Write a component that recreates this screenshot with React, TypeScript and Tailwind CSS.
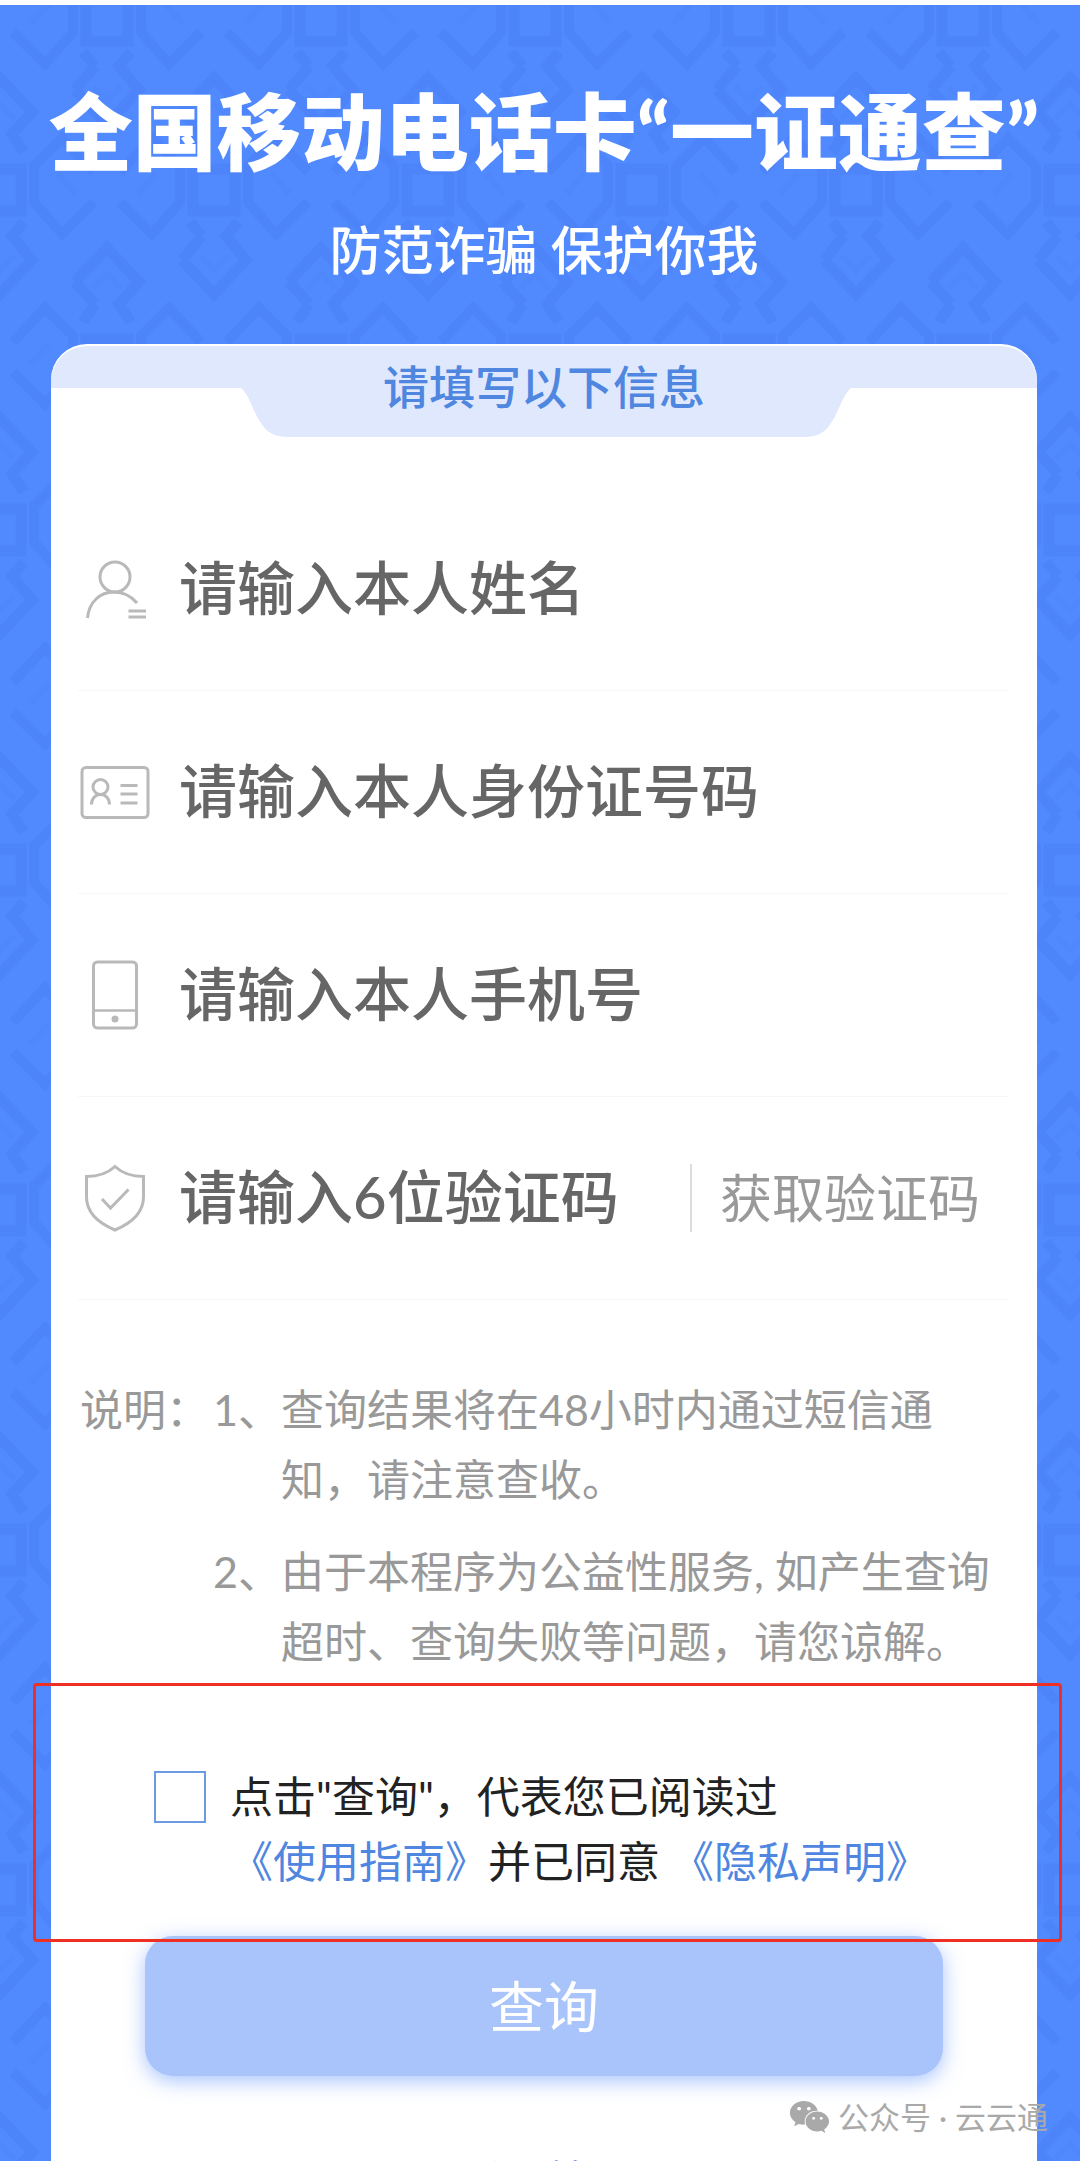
import { useState } from 'react';
import type { ReactNode } from 'react';
import { FaWeixin } from 'react-icons/fa';

type Field = {
  id: string;
  label: string;
  type: string;
  icon: ReactNode;
};

const iconProps = {
  viewBox: '0 0 70 70',
  fill: 'none',
  stroke: '#b9b9b9',
  strokeWidth: 3,
  className: 'h-[70px] w-[70px] shrink-0',
  'aria-hidden': true,
};

const UserIcon = () => (
  <svg {...iconProps}>
    <circle cx="35" cy="23" r="15" />
    <path d="M7.500 64C9 48 20 38 34 38c9 0 17 4 23 11" />
    <path d="M48.500 57H66M48.500 63H66" />
  </svg>
);

const IdCardIcon = () => (
  <svg {...iconProps}>
    <rect x="2" y="10.500" width="66" height="50" rx="4" />
    <circle cx="20.500" cy="30" r="7.500" />
    <path d="M11.500 47.500c0-6 4-10 9-10s9 4 9 10M40.500 28.500h17M40.500 37h17M40.500 46h17" />
  </svg>
);

const PhoneIcon = () => (
  <svg {...iconProps}>
    <rect x="13.500" y="2" width="43" height="66" rx="4" />
    <path d="M13.500 50.500h43" strokeWidth={2.5} />
    <circle cx="35" cy="59" r="3.500" fill="#b9b9b9" stroke="none" />
  </svg>
);

const ShieldIcon = () => (
  <svg {...iconProps}>
    <path d="M35 3.500C28 10 18 13.500 6.500 13.500V34c0 16 13 26.500 28.500 33C50.500 60.500 63.500 50 63.500 34V13.500C52 13.500 42 10 35 3.500Z" />
    <path d="M22 36l8.500 9L48.500 26.500" />
  </svg>
);

const FIELDS: Field[] = [
  { id: 'name', label: '请输入本人姓名', type: 'text', icon: <UserIcon /> },
  { id: 'idcard', label: '请输入本人身份证号码', type: 'text', icon: <IdCardIcon /> },
  { id: 'phone', label: '请输入本人手机号', type: 'tel', icon: <PhoneIcon /> },
  { id: 'code', label: '请输入6位验证码', type: 'text', icon: <ShieldIcon /> },
];

const NOTES = [
  '查询结果将在48小时内通过短信通知，请注意查收。',
  '由于本程序为公益性服务, 如产生查询超时、查询失败等问题，请您谅解。',
];

// One woven ornament, centred on its square
function Ornament({ x, y }: { x: number; y: number }) {
  return (
    <g transform={`translate(${x} ${y})`}>
      <rect x="-21" y="-21" width="42" height="42" strokeWidth="11" />
      <path d="M-32 -78L0 -112L32 -78L12 -56L24 -38M-12 -56L-32 -78M-12 -56L-24 -38" strokeWidth="11" />
      <path d="M-32 70L0 104L32 70L12 46L24 32M-12 46L-32 70M-12 46L-24 32" strokeWidth="11" />
      <path d="M-14 -72L0 -86L14 -72M-14 66L0 80L14 66" stroke="#4f87fc" strokeWidth="6" />
      <path d="M-94 -18L-62 -52L-34 -24L-34 12L-62 44L-94 12M94 -18L62 -52L34 -24L34 12L62 44L94 12" strokeWidth="10" />
      <path d="M-76 4L-58 -16M76 4L58 -16" stroke="#4f87fc" strokeWidth="7" />
    </g>
  );
}

function Backdrop() {
  return (
    <svg className="absolute inset-0 h-full w-full" aria-hidden="true">
      <defs>
        <pattern id="weave" width="214" height="340" patternUnits="userSpaceOnUse">
          <g fill="none" stroke="#4d84fa">
            <Ornament x={107} y={15} />
            <Ornament x={107} y={355} />
            <Ornament x={0} y={185} />
            <Ornament x={214} y={185} />
          </g>
        </pattern>
      </defs>
      <rect width="100%" height="100%" fill="#5189fe" />
      <rect width="100%" height="100%" fill="url(#weave)" />
    </svg>
  );
}

export default function App() {
  const [values, setValues] = useState<Record<string, string>>({});
  const [agreed, setAgreed] = useState(false);

  return (
    <div className="relative flex h-screen flex-col overflow-hidden border-t-[5px] border-white font-['Lato','Noto_Sans_CJK_SC',sans-serif]">
      <Backdrop />

      <header className="relative pt-[77px] pl-2 text-center text-white">
        <h1 className="text-[84px] leading-[100px] font-black whitespace-nowrap">全国移动电话卡“一证通查”</h1>
        <p className="mt-[36px] text-[52px] leading-[64px] font-medium">防范诈骗 保护你我</p>
      </header>

      <main className="relative mt-[62px] mr-[43px] ml-[51px] flex-1 rounded-t-[36px] border-t-2 border-white bg-white">
        <div className="flex justify-center rounded-t-[36px] bg-[linear-gradient(#dfe8fd_42px,transparent_42px)] pl-1">
          <div className="relative h-[91px] w-[610px] text-center">
            <svg viewBox="0 0 610 91" className="absolute inset-0 h-full w-full" aria-hidden="true">
              <path d="M0 42H610C602 48 597 68 590 77C584 87 576 91 562 91H48C34 91 26 87 20 77C13 68 8 48 0 42Z" fill="#dfe8fd" />
            </svg>
            <h2 className="relative pt-[11px] pr-1 text-[46px] leading-[60px] font-medium text-[#4f86e0]">请填写以下信息</h2>
          </div>
        </div>

        <form className="pt-[51px]" onSubmit={e => e.preventDefault()}>
          <div className="mr-[29px] ml-[27px]">
            {FIELDS.map(field => (
              <div key={field.id} className="flex h-[203px] items-center border-b border-[#f7f7f7] pl-0.5">
                {field.icon}
                <input
                  id={field.id}
                  type={field.type}
                  aria-label={field.label}
                  placeholder={field.label}
                  value={values[field.id] ?? ''}
                  onChange={e => setValues({ ...values, [field.id]: e.target.value })}
                  className="ml-[29px] h-[90px] min-w-0 flex-1 pb-1 text-[58px] font-medium text-[#333] outline-none placeholder:text-[#666]"
                />
                {field.id === 'code' && (
                  <button type="button" className="mr-[28px] h-[68px] border-l-2 border-[#ddd] pl-[28px] text-[52px] leading-[64px] text-[#999]">
                    获取验证码
                  </button>
                )}
              </div>
            ))}
          </div>

          <div className="mt-[75px] mr-[29px] ml-[29px] flex text-[43px] leading-[70px] text-[#999]">
            <span className="mr-1 shrink-0">说明：</span>
            <ol className="flex-1 space-y-[22px]">
              {NOTES.map((note, i) => (
                <li key={note} className="flex">
                  <span className="shrink-0">{i + 1}、</span>
                  <span>{note}</span>
                </li>
              ))}
            </ol>
          </div>

          <div className="relative mt-[7px] h-[257px] pt-[80px] pl-[103px]">
            {/* highlight frame around the consent block */}
            <div className="pointer-events-none absolute -top-px -right-[25px] -left-[18px] z-10 h-[259px] rounded-[4px] border-3 border-[#ee2f23]" />
            <div className="flex">
              <input
                id="agree"
                type="checkbox"
                checked={agreed}
                onChange={e => setAgreed(e.target.checked)}
                className="mt-[7px] h-[52px] w-[52px] shrink-0 appearance-none border-2 border-[#6d9be3] bg-white checked:bg-[#5189fe]"
              />
              <div className="ml-6 text-[43px] leading-[65px] whitespace-nowrap text-[#222]">
                <label htmlFor="agree" className="block">点击"查询"，代表您已阅读过</label>
                <p>
                  <a href="#guide" className="text-[#4f86e0]">《使用指南》</a>并已同意 <a href="#privacy" className="text-[#4f86e0]">《隐私声明》</a>
                </p>
              </div>
            </div>
          </div>

          <button
            type="submit"
            className="mr-[94px] -mt-[5px] ml-[94px] block h-[140px] w-[calc(100%-188px)] rounded-[28px] bg-[#a8c4fb] text-[55px] text-white shadow-[0_5px_20px_rgba(81,137,254,0.5)]"
          >
            查询
          </button>

          <a href="#home" className="mx-auto mt-[73px] block w-fit text-[43px] leading-[64px] text-[#4f86e0]">返回首页</a>
        </form>
      </main>

      <div className="absolute right-[32px] bottom-[24px] flex items-center gap-2 text-[31px] leading-[36px] text-[#a9a9a9]">
        <FaWeixin className="h-[40px] w-[41px]" />
        <span>公众号 · 云云通</span>
      </div>
    </div>
  );
}
